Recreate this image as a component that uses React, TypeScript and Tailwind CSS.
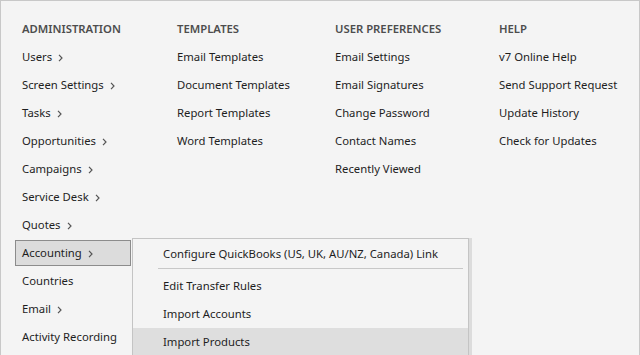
import React from "react";

const font = { fontFamily: '"Noto Sans", "Open Sans", sans-serif' };

function Chevron() {
  return (
    <svg width="5" height="8" viewBox="0 0 5 8" className="ml-[6px] mt-px">
      <path d="M1 0.8 L4 4 L1 7.2" fill="none" stroke="#555" strokeWidth="1.2" />
    </svg>
  );
}

type Item = { label: string; sub?: boolean; active?: boolean };

const columns: { title: string; width: string; items: Item[] }[] = [
  {
    title: "Administration",
    width: "w-[155px]",
    items: [
      { label: "Users", sub: true },
      { label: "Screen Settings", sub: true },
      { label: "Tasks", sub: true },
      { label: "Opportunities", sub: true },
      { label: "Campaigns", sub: true },
      { label: "Service Desk", sub: true },
      { label: "Quotes", sub: true },
      { label: "Accounting", sub: true, active: true },
      { label: "Countries" },
      { label: "Email", sub: true },
      { label: "Activity Recording" },
    ],
  },
  {
    title: "Templates",
    width: "w-[158px]",
    items: [
      { label: "Email Templates" },
      { label: "Document Templates" },
      { label: "Report Templates" },
      { label: "Word Templates" },
    ],
  },
  {
    title: "User Preferences",
    width: "w-[164px]",
    items: [
      { label: "Email Settings" },
      { label: "Email Signatures" },
      { label: "Change Password" },
      { label: "Contact Names" },
      { label: "Recently Viewed" },
    ],
  },
  {
    title: "Help",
    width: "flex-1",
    items: [
      { label: "v7 Online Help" },
      { label: "Send Support Request" },
      { label: "Update History" },
      { label: "Check for Updates" },
    ],
  },
];

function MenuItem({ item }: { item: Item }) {
  if (item.active) {
    return (
      <div className="h-[28px] flex items-center">
        <div className="-ml-[7px] w-[116px] h-[26px] flex items-center pl-[6px] pt-px bg-[#dcdcdc] border border-[#8c8c8c]">
          <span>{item.label}</span>
          <Chevron />
        </div>
      </div>
    );
  }
  return (
    <div className="h-[28px] flex items-center pt-px">
      <span>{item.label}</span>
      {item.sub && <Chevron />}
    </div>
  );
}

export default function App() {
  return (
    <div
      style={font}
      className="relative w-[640px] h-[355px] overflow-hidden bg-[#f4f4f4] border-t border-l border-r border-[#c8c8c8] text-[11.3px] text-[#1e1e1e]"
    >
      <div className="flex pl-[21px] pt-[14px]">
        {columns.map((col) => (
          <div key={col.title} className={col.width}>
            <div className="h-[28px] flex items-center pt-px uppercase font-semibold text-[#4d4d4d]">
              {col.title}
            </div>
            {col.items.map((it) => (
              <MenuItem key={it.label} item={it} />
            ))}
          </div>
        ))}
      </div>

      {/* Accounting flyout */}
      <div className="absolute left-[131px] top-[237px] w-[337px] bg-[#f4f4f4] border border-[#c4c4c4] shadow-[3px_0_0_#dcdcdc]">
        <div className="h-[29px] flex items-center pl-[30px] pt-[2px] whitespace-nowrap">
          Configure QuickBooks (US, UK, AU/NZ, Canada) Link
        </div>
        <div className="ml-[25px] mr-[5px] h-px bg-[#c8c8c8] mb-[3px]" />
        <div className="h-[28px] flex items-center pl-[30px] pt-px">Edit Transfer Rules</div>
        <div className="h-[28px] flex items-center pl-[30px] pt-px">Import Accounts</div>
        <div className="h-[28px] flex items-center pl-[30px] pt-px bg-[#dedede]">Import Products</div>
      </div>
    </div>
  );
}
